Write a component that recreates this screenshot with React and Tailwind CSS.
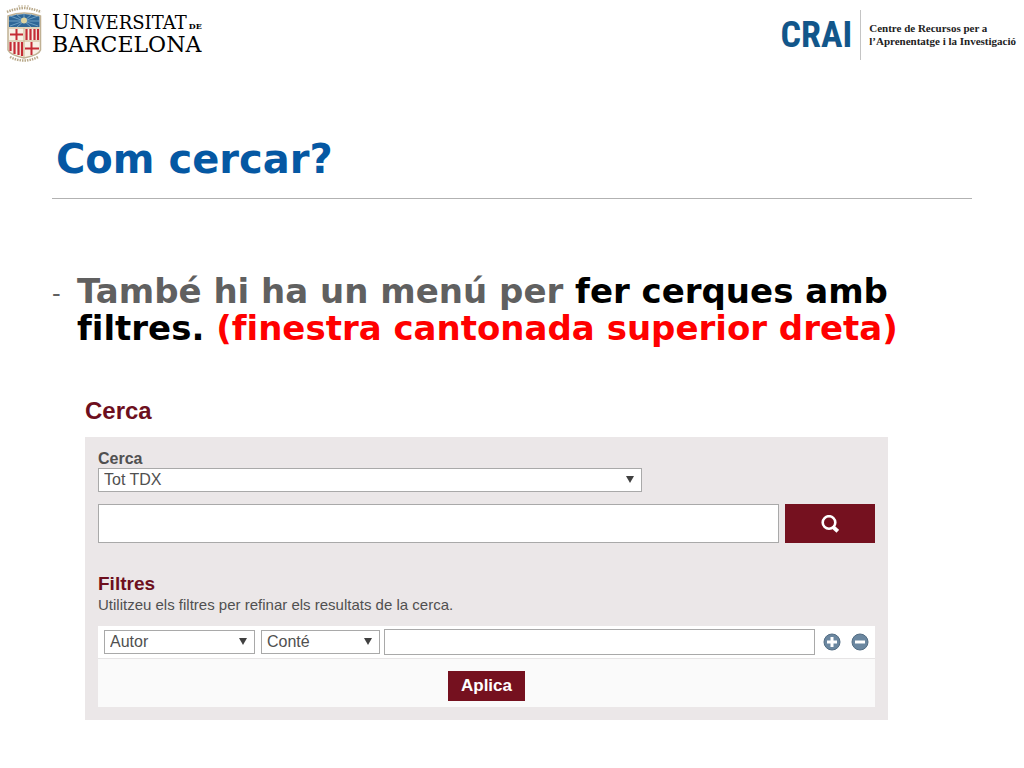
import { useState } from 'react';

const SCOPES = ['Tot TDX', 'Universitat de Barcelona'];
const FIELDS = ['Autor', 'Títol', 'Director', 'Matèria'];
const OPERATORS = ['Conté', 'És igual a', 'No conté'];

function Crest() {
  return (
    <svg viewBox="0 0 36 60" className="h-[60px] w-9 shrink-0" aria-hidden="true">
      {/* motto ribbons */}
      <path d="M1 8 Q9 4.500 18 4 Q27 4.500 35 8" fill="none" stroke="#b9a98a" strokeWidth="2.500" strokeDasharray="1.500 1" />
      <path d="M12 2 H24" fill="none" stroke="#d8cebb" strokeWidth="1.500" strokeDasharray="2 1" />
      <path d="M4 53 Q18 60 32 53" fill="none" stroke="#b9a98a" strokeWidth="2.500" strokeDasharray="1.500 1" />
      <path d="M2 12 Q18 6 34.500 12 V46 Q33 51 18 54 Q4 51 2 46 Z" fill="#f8f1e6" stroke="#c0b194" strokeWidth="1.500" />
      {/* radiant sun */}
      <path d="M3 12.500 Q18 7.500 33.500 12.500 V23 H3 Z" fill="#2f6797" />
      <path
        d="M18 17 L4 12 M18 17 L10 10 M18 17 L18 9 M18 17 L26 10 M18 17 L32 12 M18 17 L3 17 M18 17 L33 17 M18 17 L4 22 M18 17 L11 23 M18 17 L25 23 M18 17 L32 22"
        stroke="#7fadce"
        strokeWidth="0.800"
      />
      <circle cx="18" cy="16.500" r="3" fill="#ddd39f" />
      <path d="M3 24 H33.500 M18 24 V53 M3 37 H33.500" stroke="#c9b48e" strokeWidth="1" />
      {/* crosses and bars */}
      <path d="M10.500 25 V36 M4 30.500 H17 M25.500 38 V51 M19 44.500 H33" stroke="#c42b35" strokeWidth="2" />
      <path d="M20.500 25 V36 M24.500 25 V36 M28.500 25 V36 M32 25 V36 M4.500 38 V47 M8.500 38 V50 M12.500 38 V51 M16 38 V52" stroke="#c42b35" strokeWidth="2.200" />
    </svg>
  );
}

function Select({ id, label, options, className }) {
  return (
    <div className={`relative ${className}`}>
      <select
        id={id}
        aria-label={label}
        className="block h-6 w-full appearance-none border border-[#a9a9a9] bg-white pl-[5px] pr-6 text-base leading-5 text-[#505050]"
      >
        {options.map((o) => (
          <option key={o}>{o}</option>
        ))}
      </select>
      <svg viewBox="0 0 8 7" className="pointer-events-none absolute right-2 top-2 h-[7px] w-2" aria-hidden="true">
        <path d="M0 0 H8 L4 7 Z" fill="#404040" />
      </svg>
    </div>
  );
}

function RoundButton({ label, path, onClick }) {
  return (
    <button type="button" aria-label={label} onClick={onClick} className="shrink-0">
      <svg viewBox="0 0 18 18" className="block size-[18px]">
        <circle cx="9" cy="9" r="8" fill="#6b87a0" stroke="#536d84" strokeWidth="1" />
        <path d={path} stroke="#fff" strokeWidth="3" />
      </svg>
    </button>
  );
}

export default function App() {
  const [query, setQuery] = useState('');
  const [filter, setFilter] = useState('');

  return (
    <div className="min-h-screen bg-white font-['Liberation_Sans',Arial,sans-serif] text-[#505050]">
      {/* LOGOS */}
      <header className="flex items-start justify-between pl-1.5 pr-2 pt-1">
        <div className="flex items-start gap-2.5">
          <Crest />
          <div className="pt-2 font-['DejaVu_Serif',serif] text-black">
            <div className="text-lg leading-5">
              <span className="text-[21px] leading-5">U</span>NIVERSITAT
              <span className="ml-0.5 text-[8px] font-bold">DE</span>
            </div>
            <div className="text-[22px] leading-[18px]">BARCELONA</div>
          </div>
        </div>
        <div className="mt-1.5 flex items-center gap-2">
          <div className="font-['Roboto_Condensed','DejaVu_Sans_Condensed',sans-serif] text-4xl font-bold leading-[50px] text-[#12568a]">
            CRAI
          </div>
          <div className="h-[50px] border-l border-[#c4c4c4]" />
          <p className="font-['Liberation_Serif',serif] text-[11px] font-bold leading-[13px] text-[#222]">
            Centre de Recursos per a
            <br />
            l’Aprenentatge i la Investigació
          </p>
        </div>
      </header>

      {/* TITLE */}
      <div className="ml-[52px] mr-[52px] mt-[71px] border-b border-[#b2b2b2] pb-[15px] pl-1">
        <h1 className="font-['DejaVu_Sans',Verdana,sans-serif] text-[40px] font-bold leading-[48px] text-[#0558a3]">
          Com cercar?
        </h1>
      </div>

      <ul className="ml-[52px] mr-[100px] mt-[74px] font-['DejaVu_Sans',Verdana,sans-serif] leading-[37px] [font-variant-ligatures:none]">
        <li className="flex text-[34px] font-bold text-black">
          <span className="w-[25px] shrink-0 text-2xl font-normal leading-[42px] text-[#606060]">-</span>
          <p>
            <span className="text-[#606060]">També hi ha un menú per</span> fer cerques amb
            <br />
            filtres. <span className="text-[#ff0000]">(finestra cantonada superior dreta)</span>
          </p>
        </li>
      </ul>

      {/* SEARCH FORM */}
      <section className="ml-[85px] mr-[136px] mt-[50px]">
        <h2 className="text-2xl font-bold leading-7 text-[#6d0f1e]">Cerca</h2>
        <form onSubmit={(e) => e.preventDefault()} className="mt-3 bg-[#ebe7e8] p-[13px]">
          <label htmlFor="scope" className="block text-base font-bold leading-[18px]">
            Cerca
          </label>
          <Select id="scope" options={SCOPES} className="w-[70%]" />

          <div className="mt-3 flex gap-1.5">
            <input
              aria-label="Text de cerca"
              value={query}
              onChange={(e) => setQuery(e.target.value)}
              className="h-[39px] min-w-0 flex-1 border border-[#a9a9a9] bg-white px-2"
            />
            <button type="submit" aria-label="Cerca" className="flex h-[39px] w-[90px] items-center justify-center bg-[#75111f]">
              <svg viewBox="0 0 18 18" className="size-[18px]" fill="none" stroke="#fff">
                <circle cx="8" cy="7.500" r="6.300" strokeWidth="2.600" />
                <path d="M11.500 11.500 L16.800 16.300" strokeWidth="3.800" />
              </svg>
            </button>
          </div>

          <h3 className="mt-[30px] text-[19px] font-bold leading-[22px] text-[#6d0f1e]">Filtres</h3>
          <p className="text-[15px] leading-5">Utilitzeu els filtres per refinar els resultats de la cerca.</p>

          <div className="mt-[11px] bg-[#fafafa]">
            <div className="flex items-center border-b border-[#e6e4e5] bg-white px-1.5 py-[3px]">
              <Select label="Camp" options={FIELDS} className="w-[151px]" />
              <Select label="Operador" options={OPERATORS} className="ml-1.5 w-[119px]" />
              <input
                aria-label="Valor del filtre"
                value={filter}
                onChange={(e) => setFilter(e.target.value)}
                className="ml-1 mr-2 h-[26px] min-w-0 flex-1 border border-[#a9a9a9] bg-white px-1"
              />
              <div className="flex gap-2.5">
                <RoundButton label="Afegeix" path="M9 4 V14 M4 9 H14" />
                <RoundButton label="Elimina" path="M4 9 H14" onClick={() => setFilter('')} />
              </div>
            </div>
            <div className="flex justify-center pb-1.5 pt-3">
              <button type="submit" className="h-[30px] bg-[#75111f] px-[13px] text-[17px] font-bold text-white">
                Aplica
              </button>
            </div>
          </div>
        </form>
      </section>
    </div>
  );
}
